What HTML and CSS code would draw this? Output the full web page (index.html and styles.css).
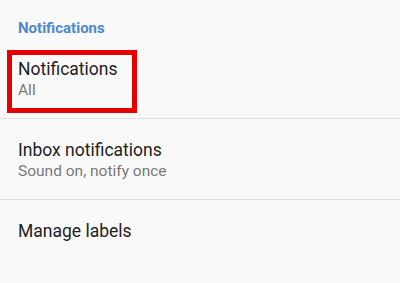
FILE: index.html
```html
<!DOCTYPE html>
<html>
<head>
<meta charset="utf-8">
<link rel="stylesheet" href="styles.css">
</head>
<body>
<div class="screen">
  <div class="section-header">Notifications</div>
  <div class="item item-highlighted">
    <div class="item-title">Notifications</div>
    <div class="item-sub">All</div>
    <span class="highlight-box"></span>
  </div>
  <div class="item">
    <div class="item-title">Inbox notifications</div>
    <div class="item-sub">Sound on, notify once</div>
  </div>
  <div class="item item-last">
    <div class="item-title">Manage labels</div>
  </div>
</div>
</body>
</html>
```

FILE: styles.css
```css
html, body {
  margin: 0;
  padding: 0;
  background: #f9f9f9;
}
.screen {
  width: 400px;
  height: 283px;
  overflow: hidden;
  font-family: Roboto, "Noto Sans", sans-serif;
  background: #f9f9f9;
}
.section-header {
  box-sizing: border-box;
  height: 38px;
  padding: 20px 18px 0;
  font-size: 15px;
  line-height: 16px;
  font-weight: 700;
  color: #4f88cc;
}
.item {
  position: relative;
  box-sizing: border-box;
  height: 81px;
  padding: 20.5px 18px 0;
  border-bottom: 1px solid #dedede;
}
.item-last {
  border-bottom: none;
}
.item-title {
  font-size: 17.5px;
  line-height: 21px;
  color: #222222;
}
.item-sub {
  font-size: 15.5px;
  line-height: 20px;
  color: #7a7a7a;
}
.highlight-box {
  position: absolute;
  left: 7px;
  top: 12px;
  width: 130px;
  height: 63px;
  box-sizing: border-box;
  border: 5px solid #e60000;
}
```
